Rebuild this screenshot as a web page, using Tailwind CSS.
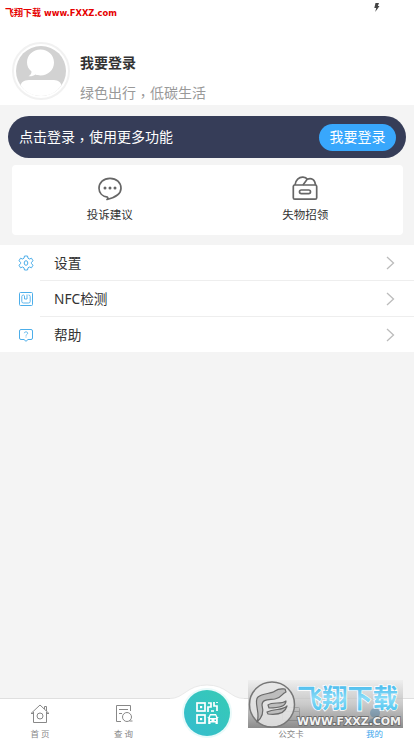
<!DOCTYPE html>
<html lang="zh-CN">
<head>
<meta charset="utf-8">
<title>我的</title>
<script src="https://cdn.jsdelivr.net/npm/@tailwindcss/browser@4"></script>
</head>
<body class="w-[414px] h-[740px] overflow-hidden bg-[#f4f4f4] font-['Noto_Sans','Noto_Sans_CJK_SC',sans-serif] text-[#333]">
<div class="relative flex h-[740px] flex-col">
  <header class="h-[105px] shrink-0 bg-white">
    <div class="flex h-[42px] items-start justify-between pl-[5px] pr-[34px]">
      <div class="flex items-center gap-[3px] pt-[5px] font-bold leading-4 text-[#e60000] whitespace-nowrap">
        <span class="font-['Noto_Sans_CJK_SC',sans-serif] text-[9px]">飞翔下载</span>
        <svg class="overflow-visible" width="80" height="16"><text x="0" y="11" font-family="DejaVu Sans, sans-serif" font-size="9.500" textLength="73" lengthAdjust="spacingAndGlyphs" fill="#e60000">www.FXXZ.com</text></svg>
      </div>
      <svg class="mt-[3px]" width="6" height="9" viewBox="0 0 6 9"><path d="M1.500 0H5L3.800 3H5.500L1.200 9L2.200 5H.3Z" fill="#444"/></svg>
    </div>
    <div class="flex pl-[12px]">
      <svg class="shrink-0" width="58" height="58" viewBox="0 0 58 58">
        <circle cx="29" cy="29" r="28" fill="#fff" stroke="#f1f1f1" stroke-width="2"/>
        <circle cx="29" cy="29" r="25" fill="#d2d2d2"/>
        <path d="M28.500 7.500C36 7.500 42 13 42 20.500S36 33.500 28.500 33.500C26.500 33.500 25 33.200 23.500 32.600C21.500 34 19.500 34.500 16.500 34.300C18.500 33 19.500 31.500 19.500 29.500C16.500 27 15 24 15 20.500C15 13 21 7.500 28.500 7.500Z" fill="#fff"/>
        <path d="M8.500 43C10 39 13 38 19 38H40C45 38 48 39 49.500 43C45 50 38 54 29 54S12.500 50 8.500 43Z" fill="#fff"/>
      </svg>
      <div class="pl-[10px] pt-[9px] whitespace-nowrap">
        <div class="font-['Noto_Sans_CJK_SC',sans-serif] text-[14px] font-bold leading-[22px]">我要登录</div>
        <div class="mt-[8px] font-['Noto_Sans_CJK_SC',sans-serif] text-[14px] leading-[22px] text-[#999]">绿色出行<span lang="zh-TW" class="inline-block translate-y-[3px] leading-none font-['Noto_Sans_CJK_TC',sans-serif]">，</span>低碳生活</div>
      </div>
    </div>
  </header>

  <section class="mt-[11px] ml-[8px] mr-[8px] flex h-[42px] shrink-0 items-center justify-between rounded-full bg-[#363d58] pl-[11px] pr-[10px] font-['Noto_Sans_CJK_SC',sans-serif] text-[14px] leading-[20px] text-white whitespace-nowrap">
    <span class="pb-[2px]">点击登录<span lang="zh-TW" class="inline-block translate-y-[3px] leading-none font-['Noto_Sans_CJK_TC',sans-serif]">，</span>使用更多功能</span>
    <button class="h-[27px] w-[77px] rounded-full bg-[#38a7fc] pb-[2px]">我要登录</button>
  </section>

  <section class="ml-[12px] mr-[11px] mt-[7px] grid h-[70px] shrink-0 grid-cols-2 rounded-sm bg-white font-['Noto_Sans_CJK_SC',sans-serif] text-[11.5px] leading-[18px]">
    <div class="flex flex-col items-center pt-[11px]">
      <svg width="26" height="26" viewBox="0 0 26 26" fill="none" stroke="#666" stroke-width="1.700"><path d="M10.500 21.200C5.500 20.500 2 17 2 12.300C2 6.700 6.500 2.300 13 2.300S24 6.700 24 12.300C24 17.700 18.500 21.500 10 23.500C11 22.700 11.200 22 10.500 21.200Z" stroke-linejoin="round"/><g fill="#666" stroke="none"><circle cx="8" cy="12" r="1.500"/><circle cx="13" cy="12" r="1.500"/><circle cx="18" cy="12" r="1.500"/></g></svg>
      <span class="mt-[3px]">投诉建议</span>
    </div>
    <div class="flex flex-col items-center pt-[11px]">
      <svg width="26" height="26" viewBox="0 0 26 26" fill="none" stroke="#666" stroke-width="1.700"><rect x="1.300" y="9" width="23.400" height="14.200" rx="1.500"/><rect x="7.500" y="14" width="11" height="3.600" rx="1.800"/><path d="M3 9C3.500 4 7 1 11 1.200C13 1.300 14.500 2 15.200 3.200L11 9M15.200 3.200C19.500 1.500 23 3.500 23.500 9"/></svg>
      <span class="mt-[3px]">失物招领</span>
    </div>
  </section>

  <section class="mt-[10px] shrink-0 bg-white font-['Noto_Sans','Noto_Sans_CJK_SC',sans-serif] text-[13.7px] leading-[20px]">
    <div class="flex h-[35px] items-center pl-[18px] pr-[19px]">
      <svg width="16" height="16" viewBox="0 0 16 16" fill="none" stroke="#4caeea"><path d="M6.500 1H9.500L10 3.200L11.500 4L13.500 3.200L15 5.800L13.500 7.300V8.700L15 10.200L13.500 12.800L11.500 12L10 12.800L9.500 15H6.500L6 12.800L4.500 12L2.500 12.800L1 10.200L2.500 8.700V7.300L1 5.800L2.500 3.200L4.500 4L6 3.200Z" stroke-linejoin="round"/><ellipse cx="8" cy="8" rx="1.800" ry="2.300"/></svg>
      <span class="ml-[20px] grow">设置</span>
      <svg width="9" height="14" viewBox="0 0 9 14" fill="none" stroke="#bcbcbc" stroke-width="1.300"><path d="M1 1L7.500 7L1 13"/></svg>
    </div>
    <div class="ml-[40px] h-px bg-[#eee]"></div>
    <div class="flex h-[35px] items-center pl-[18px] pr-[19px]">
      <svg width="16" height="16" viewBox="0 0 16 16" fill="none" stroke="#4caeea"><rect x="1.500" y="1.500" width="13" height="13" rx="1"/><path d="M6 4H5.500Q3.800 4 3.800 5.500V10.500Q3.800 12 5.500 12H10.500Q12.200 12 12.200 10.500V5.500Q12.200 4 10.500 4M6.500 4.500V8H9V3.500" stroke-width=".9"/></svg>
      <span class="ml-[20px] grow">NFC检测</span>
      <svg width="9" height="14" viewBox="0 0 9 14" fill="none" stroke="#bcbcbc" stroke-width="1.300"><path d="M1 1L7.500 7L1 13"/></svg>
    </div>
    <div class="ml-[40px] h-px bg-[#eee]"></div>
    <div class="flex h-[35px] items-center pl-[18px] pr-[19px]">
      <svg width="16" height="16" viewBox="0 0 16 16" fill="none" stroke="#4caeea"><path d="M3 2.500H13Q14.500 2.500 14.500 4V11Q14.500 12.500 13 12.500H10L8 14.300L6 12.500H3Q1.500 12.500 1.500 11V4Q1.500 2.500 3 2.500Z"/><path d="M6.300 6.200C6.300 4.300 9.700 4.300 9.700 6.200C9.700 7.500 8 7.300 8 8.700M8 9.500V10.500" stroke-width=".8"/></svg>
      <span class="ml-[20px] grow">帮助</span>
      <svg width="9" height="14" viewBox="0 0 9 14" fill="none" stroke="#bcbcbc" stroke-width="1.300"><path d="M1 1L7.500 7L1 13"/></svg>
    </div>
  </section>

  <nav class="relative mt-auto flex h-[42px] shrink-0 border-t border-[#dfdfdf] bg-white font-['Noto_Sans_CJK_SC',sans-serif] text-[8.5px] leading-[12px] text-[#888] whitespace-nowrap">
    <div class="flex w-[80px] flex-col items-center pt-[5px]">
      <svg width="20" height="20" viewBox="0 0 20 20" fill="none" stroke="#888"><path d="M1 9.500L10 1L19 9.500M3.500 8V18.500H16.500V8M14.500 5V2.500H16.500V7M1 9.500H3.500M16.500 9.500H19"/><circle cx="10" cy="12" r="3"/></svg>
      <span class="mt-[3px]">首 页</span>
    </div>
    <div class="flex w-[87px] flex-col items-center pt-[5px]">
      <svg width="20" height="20" viewBox="0 0 20 20" fill="none" stroke="#888"><path d="M7 17.500H2.500V1.500H16.500V7M5 5.500H14M5 9.500H8"/><circle cx="13" cy="13" r="4.500"/><path d="M15.500 17H18.500"/></svg>
      <span class="mt-[3px]">查 询</span>
    </div>
    <div class="w-[80px]"></div>
    <div class="flex w-[88px] flex-col items-center pt-[5px]">
      <svg width="20" height="20" viewBox="0 0 20 20" fill="none" stroke="#777"><rect x="1.500" y="3.500" width="17" height="13" rx="1"/><path d="M2 7.500H18"/></svg>
      <span class="mt-[3px]">公交卡</span>
    </div>
    <div class="flex w-[79px] flex-col items-center pt-[5px] text-[#38a4ec]">
      <svg width="20" height="20" viewBox="0 0 20 20" fill="#168ce0"><circle cx="10" cy="9" r="5"/><path d="M3 20C3 12 17 12 17 20Z"/></svg>
      <span class="mt-[3px]">我的</span>
    </div>
    <svg class="absolute left-[167px] top-[-16px]" width="80" height="57" viewBox="0 0 80 57">
      <defs><linearGradient id="teal" x1="0" y1="1" x2="1" y2="0"><stop stop-color="#35bccf"/><stop offset="1" stop-color="#36cbb5"/></linearGradient></defs>
      <path d="M3 15.500C17 15.500 20 2 40 2S63 15.500 77 15.500V57H3Z" fill="#fff"/>
      <path d="M3 15.500C17 15.500 20 2 40 2S63 15.500 77 15.500" fill="none" stroke="#e9e9e9"/>
      <circle cx="40" cy="30" r="25" fill="#e9fafa"/>
      <circle cx="40" cy="30" r="23" fill="url(#teal)"/>
      <g fill="none" stroke="#fff" stroke-width="1.700"><rect x="30" y="20" width="8" height="8"/><rect x="30" y="32" width="8" height="8"/><path d="M41 20H44V24H41V29M47 19V23H50V28M44 28H47M50 19V20"/></g>
      <g fill="#fff"><rect x="33" y="23" width="2.200" height="2.200"/><rect x="33" y="35" width="2.200" height="2.200"/><path fill-rule="evenodd" d="M43 31H49L50.500 34L52 35H50.800V41H48.500V39.500H43.500V41H41.200V35H40L41.500 34ZM43.500 32.500L42.800 35H49.200L48.500 32.500ZM43 36.500V38H44.500V36.500ZM47.500 36.500V38H49V36.500Z"/></g>
    </svg>
  </nav>

  <svg class="absolute left-[248px] top-[680px] overflow-visible" width="155" height="48" viewBox="0 0 155 48">
    <defs>
      <linearGradient id="plate" x1="0" y1="0" x2="0" y2="1"><stop stop-color="#eee" stop-opacity=".85"/><stop offset=".5" stop-color="#b9b9b9" stop-opacity=".75"/><stop offset="1" stop-color="#777" stop-opacity=".85"/></linearGradient>
      <linearGradient id="ice" x1="0" y1="0" x2="0" y2="1"><stop stop-color="#28a9e6"/><stop offset=".55" stop-color="#8adcf8"/><stop offset="1" stop-color="#3dbdec"/></linearGradient>
    </defs>
    <rect width="155" height="48" fill="url(#plate)"/>
    <circle cx="24" cy="24.500" r="22.500" fill="#e6e6e6" fill-opacity=".85" stroke="#777" stroke-width="1.500"/>
    <g fill="#bdbdbd" stroke="#6a6a6a" stroke-width="1.200" stroke-linejoin="round">
      <path d="M9 42C13 34 5 21 10 17C15 13 23 14 27 11C31 8 34 9 37 9L38 12C33 14 34 18 27 19C20 20 14 19 14 25C16 32 15 37 9 42Z"/>
      <path d="M20 25C25 21 33 25 38 21C38 26 30 28 21 28Z"/>
      <path d="M19 32C27 28 34 31 39 26C37 34 29 35 20 34Z"/>
    </g>
    <text x="49" y="28" font-family="Noto Sans CJK SC, sans-serif" font-weight="700" font-size="26" textLength="101" lengthAdjust="spacingAndGlyphs" fill="url(#ice)" stroke="#fff" stroke-width="1.600" paint-order="stroke">飞翔下载</text>
    <text x="49" y="45" font-family="DejaVu Sans, sans-serif" font-weight="bold" font-size="11" textLength="104" lengthAdjust="spacingAndGlyphs" fill="#f2f2f2" stroke="#666" stroke-width="1.500" paint-order="stroke">WWW.FXXZ.COM</text>
  </svg>
</div>
</body>
</html>
